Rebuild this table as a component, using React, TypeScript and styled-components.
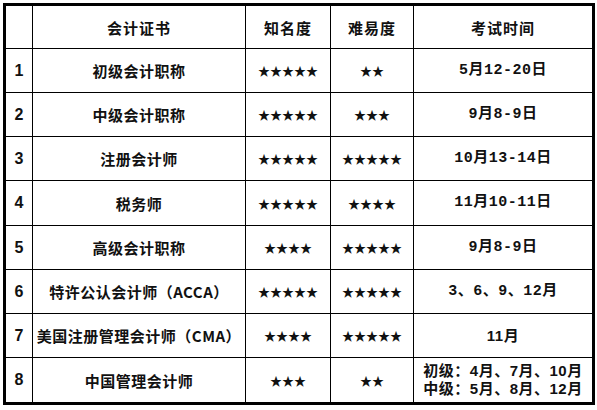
import styled, { createGlobalStyle } from "styled-components";

const GlobalStyle = createGlobalStyle`
  html, body {
    margin: 0;
    padding: 0;
    background: #ffffff;
  }
`;

const Page = styled.div`
  padding: 3px;
  width: 597px;
  height: 410px;
  box-sizing: border-box;
  background: #ffffff;
`;

const Sheet = styled.div`
  display: grid;
  grid-template-columns: 26px 212px 84px 82px 178px;
  grid-template-rows: 42px 43px 43px 43px 44px 43px 43px 43px 44px;
  gap: 1px;
  width: 592px;
  box-sizing: border-box;
  border: 3px solid #000;
  background: #000;
  color: #111;
`;

const Cell = styled.div<{ $kind?: "num" | "name" | "star" | "mono" | "sans" }>`
  background: #ffffff;
  display: flex;
  flex-direction: column;
  align-items: center;
  justify-content: center;
  font-weight: 700;
  white-space: nowrap;
  font-family: ${(p) =>
    p.$kind === "num" || p.$kind === "sans"
      ? `"Liberation Sans", "Noto Sans CJK SC", sans-serif`
      : p.$kind === "mono"
      ? `"Liberation Mono", "Noto Sans CJK SC", monospace`
      : `"Noto Sans CJK SC", sans-serif`};
  font-size: ${(p) =>
    p.$kind === "num" ? "16px" : p.$kind === "star" ? "12px" : "15px"};
  letter-spacing: ${(p) => (p.$kind === "star" || p.$kind === "num" ? "0" : "0.5px")};
`;

const HeadCell = styled(Cell)`
  font-weight: 700;
  font-size: 15px;
  letter-spacing: 1px;
`;

const Line = styled.span`
  line-height: 18px;
`;

type Row = {
  name: string;
  fame: number;
  hard: number;
  time: string[];
  timeKind: "mono" | "sans";
};

const rows: Row[] = [
  { name: "初级会计职称", fame: 5, hard: 2, time: ["5月12-20日"], timeKind: "mono" },
  { name: "中级会计职称", fame: 5, hard: 3, time: ["9月8-9日"], timeKind: "mono" },
  { name: "注册会计师", fame: 5, hard: 5, time: ["10月13-14日"], timeKind: "mono" },
  { name: "税务师", fame: 5, hard: 4, time: ["11月10-11日"], timeKind: "mono" },
  { name: "高级会计职称", fame: 4, hard: 5, time: ["9月8-9日"], timeKind: "mono" },
  { name: "特许公认会计师（ACCA）", fame: 5, hard: 5, time: ["3、6、9、12月"], timeKind: "mono" },
  { name: "美国注册管理会计师（CMA）", fame: 4, hard: 5, time: ["11月"], timeKind: "sans" },
  {
    name: "中国管理会计师",
    fame: 3,
    hard: 2,
    time: ["初级：4月、7月、10月", "中级：5月、8月、12月"],
    timeKind: "sans",
  },
];

const stars = (n: number) => "★".repeat(n);

export default function App() {
  return (
    <Page>
      <GlobalStyle />
      <Sheet>
        <HeadCell />
        <HeadCell>会计证书</HeadCell>
        <HeadCell>知名度</HeadCell>
        <HeadCell>难易度</HeadCell>
        <HeadCell>考试时间</HeadCell>
        {rows.map((r, i) => [
          <Cell key={`n${i}`} $kind="num">
            {i + 1}
          </Cell>,
          <Cell key={`c${i}`} $kind="name">
            {r.name}
          </Cell>,
          <Cell key={`f${i}`} $kind="star">
            {stars(r.fame)}
          </Cell>,
          <Cell key={`h${i}`} $kind="star">
            {stars(r.hard)}
          </Cell>,
          <Cell key={`t${i}`} $kind={r.timeKind}>
            {r.time.map((t) => (
              <Line key={t}>{t}</Line>
            ))}
          </Cell>,
        ])}
      </Sheet>
    </Page>
  );
}
